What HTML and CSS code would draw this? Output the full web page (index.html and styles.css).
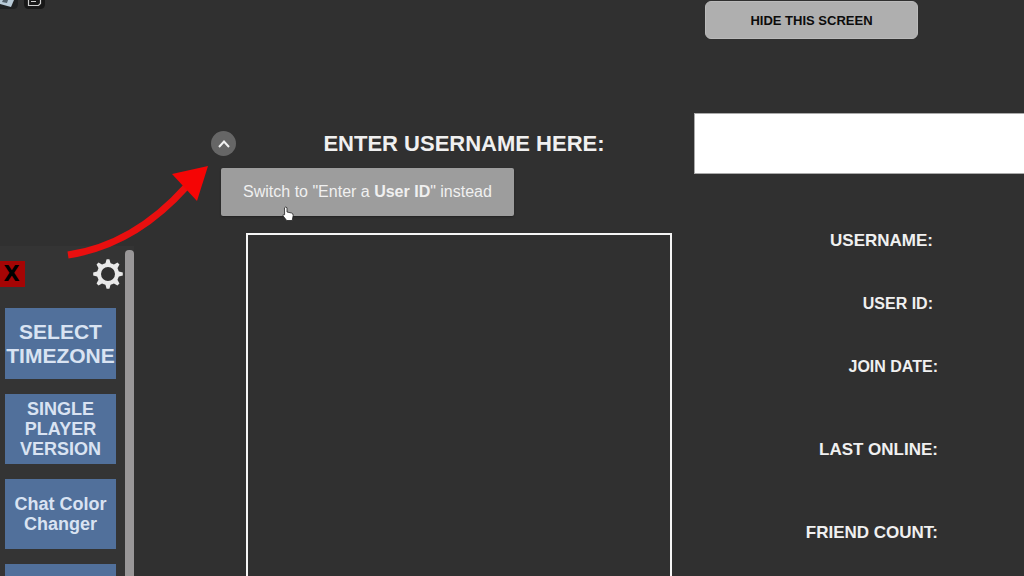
FILE: index.html
```html
<!DOCTYPE html>
<html lang="en">
<head>
    <meta charset="UTF-8">
    <meta name="viewport" content="width=device-width, initial-scale=1.0">
    <title>User lookup</title>
    <link rel="stylesheet" href="styles.css">
</head>
<body>
    <div class="screen">
        <aside class="sidebar">
            <div class="topbar">
                <svg width="48" height="10" viewBox="0 0 48 10" aria-hidden="true">
                    <path d="M0 0H18V4Q18 9 13 9H0Z" fill="#202122"/>
                    <path d="M0 0H14L11 7L0 4Z" fill="#b9cbd8"/>
                    <path d="M3 0H8L7 3L2 2Z" fill="#53616b"/>
                    <path d="M24 0H45V4Q45 9 40 9H29Q24 9 24 4Z" fill="#181818"/>
                    <path d="M28.500 0V5.500H38.500L40.500 3.500V0M31 1.500H36" fill="none" stroke="#d0d0d0" stroke-width="1.2"/>
                </svg>
            </div>
            <div class="menu">
                <div class="menu-main">
                    <div class="menu-head">
                        <button class="close">X</button>
                        <button class="gear" aria-label="Settings">
                            <svg width="30" height="30" viewBox="-15 -15 30 30">
                                <circle r="9" fill="#303030" stroke="#e9e9e9" stroke-width="4"/>
                                <g fill="#e9e9e9">
                                    <path id="tooth" d="M-2.800 -10L-1.400 -14.800H1.400L2.800 -10Z"/>
                                    <use href="#tooth" transform="rotate(45)"/>
                                    <use href="#tooth" transform="rotate(90)"/>
                                    <use href="#tooth" transform="rotate(135)"/>
                                    <use href="#tooth" transform="rotate(180)"/>
                                    <use href="#tooth" transform="rotate(225)"/>
                                    <use href="#tooth" transform="rotate(270)"/>
                                    <use href="#tooth" transform="rotate(315)"/>
                                </g>
                            </svg>
                        </button>
                    </div>
                    <div class="menu-list">
                        <button class="item big">SELECT TIMEZONE</button>
                        <button class="item">SINGLE PLAYER VERSION</button>
                        <button class="item">Chat Color Changer</button>
                        <button class="item" aria-label="More"></button>
                    </div>
                </div>
                <div class="scrollbar"></div>
            </div>
        </aside>

        <main class="search">
            <div class="title-row">
                <button class="toggle" aria-label="Switch input">
                    <svg width="12" height="8" viewBox="0 0 12 8">
                        <path d="M1 7L6 1.5L11 7" fill="none" stroke="#f2f2f2" stroke-width="2"/>
                    </svg>
                </button>
                <label class="title" for="username">ENTER USERNAME HERE:</label>
                <div class="tooltip" role="tooltip">Switch to "Enter a <b>User ID</b>" instead</div>
            </div>
            <div class="frame"></div>
        </main>

        <section class="details">
            <div class="actions">
                <button class="hide">HIDE THIS SCREEN</button>
            </div>
            <input class="name-input" id="username" type="text">
            <ul class="fields">
                <li class="inset">USERNAME:</li>
                <li class="inset small">USER ID:</li>
                <li class="small">JOIN DATE:</li>
                <li class="tall">LAST ONLINE:</li>
                <li class="tall">FRIEND COUNT:</li>
            </ul>
        </section>

        <svg class="arrow" width="142" height="94" viewBox="0 0 142 94" aria-hidden="true">
            <path d="M1 90Q67 80 119 22" fill="none" stroke="#e90f0f" stroke-width="7"/>
            <path d="M141 1L105 9L130 36Z" fill="#f50505"/>
        </svg>

        <svg class="pointer" width="12" height="16" viewBox="0 0 12 16" aria-hidden="true">
            <path d="M2.5 1.8Q3.8 0.2 5 1.8V6L9.5 7Q11.3 7.5 11.2 9.5L10.2 14.5H4.7L1 9.8Q0.6 8.2 2.6 8.7Z" fill="#fff" stroke="#222" stroke-width="0.8"/>
        </svg>
    </div>
</body>
</html>
```
FILE: styles.css
```css
* {
    box-sizing: border-box;
}
body {
    margin: 0;
    background: #303030;
    color: #f0f0f0;
    font-family: "Liberation Sans", Arial, sans-serif;
}
button {
    padding: 0;
    border: none;
    font-family: inherit;
    font-weight: bold;
    cursor: pointer;
}
svg {
    display: block;
}
.screen {
    position: relative;
    display: grid;
    grid-template-columns: 134px 1fr 330px;
    height: 100vh;
    overflow: hidden;
}

/* left menu */
.sidebar {
    display: flex;
    flex-direction: column;
    min-height: 0;
}
.topbar {
    flex: 0 0 246px;
}
.menu {
    display: flex;
    flex: 1;
    min-height: 0;
    background: #343434;
}
.menu-main {
    flex: 1;
    overflow: hidden;
}
.menu-head {
    display: flex;
    justify-content: space-between;
    align-items: center;
    height: 55px;
    padding-right: 2px;
}
.close {
    width: 25px;
    height: 26px;
    padding-right: 2px;
    background: #a50505;
    color: #000;
    font-family: "DejaVu Sans", sans-serif;
    font-size: 21px;
    line-height: 26px;
}
.gear {
    background: none;
}
.menu-list {
    display: flex;
    flex-direction: column;
    gap: 15px;
    padding: 7px 9px 0 5px;
}
.item {
    flex: none;
    height: 70px;
    background: #51709b;
    color: #d9e3f2;
    font-size: 18px;
    line-height: 20px;
}
.item.big {
    height: 71px;
    font-size: 21px;
    line-height: 24px;
}
.scrollbar {
    width: 9px;
    margin-top: 4px;
    border-radius: 4px 4px 0 0;
    background: #999798;
}

/* search area */
.search {
    display: flex;
    flex-direction: column;
    padding: 131px 22px 0 77px;
}
.title-row {
    position: relative;
    display: flex;
    align-items: center;
    gap: 20px;
    height: 25px;
}
.toggle {
    display: flex;
    align-items: center;
    justify-content: center;
    width: 25px;
    height: 25px;
    border-radius: 50%;
    background: #666;
}
.title {
    flex: 1;
    font-size: 22px;
    font-weight: bold;
    text-align: center;
}
.tooltip {
    position: absolute;
    top: 37px;
    left: 10px;
    width: 293px;
    border-radius: 2px;
    background: #9d9d9d;
    box-shadow: 0 1px 2px #222;
    font-size: 16px;
    line-height: 48px;
    text-align: center;
    white-space: nowrap;
}
.frame {
    flex: 1;
    margin: 77px 0 0 35px;
    border: 2px solid #f5f5f5;
    border-bottom: none;
}

/* user details */
.actions {
    height: 113px;
    padding: 1px 0 0 11px;
}
.hide {
    width: 213px;
    height: 38px;
    border: 1px solid #bbb;
    border-radius: 6px;
    background: #afafaf;
    color: #0c0c0c;
    font-size: 13px;
}
.name-input {
    display: block;
    width: 100%;
    height: 61px;
    padding: 0 12px;
    border: 1px solid #aaa;
    border-right: none;
    border-radius: 0;
    background: #fff;
    font-size: 22px;
}
.fields {
    margin: 0;
    padding: 35px 86px 0 0;
    list-style: none;
    font-size: 17px;
    font-weight: bold;
    line-height: 63px;
    text-align: right;
}
.fields .inset {
    padding-right: 5px;
}
.fields .small {
    font-size: 16px;
}
.fields .tall {
    padding-top: 20px;
}

/* overlays */
.arrow {
    position: absolute;
    top: 165px;
    left: 67px;
}
.pointer {
    position: absolute;
    top: 206px;
    left: 282px;
}
```
